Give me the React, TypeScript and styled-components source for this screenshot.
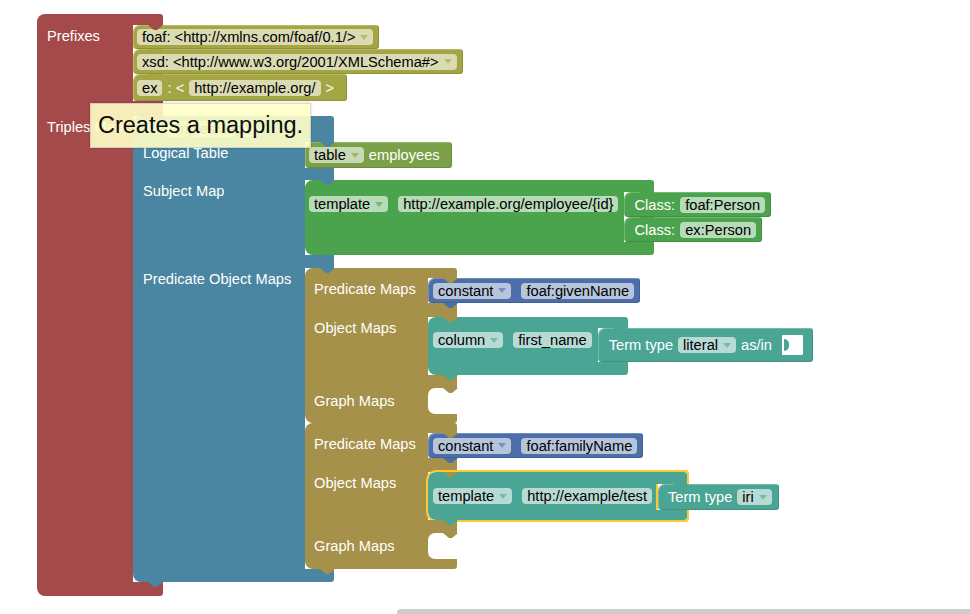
import React from "react";
import styled, { createGlobalStyle, css } from "styled-components";

const RED = "#a54a4b";
const OLIVE = "#a4a543";
const BLUE = "#4a86a1";
const LIME = "#7aa048";
const GREEN = "#4ca34e";
const GOLD = "#a59149";
const NAVY = "#4c6fa9";
const TEAL = "#4ba594";
const SEL = "#fcc833";

const GlobalStyle = createGlobalStyle`
  html, body { margin: 0; padding: 0; background: #fff; }
  body {
    font-family: "Liberation Sans", Arial, Helvetica, sans-serif;
    font-size: 14.67px;
  }
`;

const Workspace = styled.div`
  position: relative;
  box-sizing: border-box;
  width: 970px;
  height: 614px;
  overflow: hidden;
  padding: 14px 0 0 37px;
  background: #fff;
`;

// the little trapezoid that a block (or an arm above a slot) pushes downwards
const tab = (c: string, left: string) => css`
  &::after {
    content: "";
    position: absolute;
    z-index: 2;
    top: 100%;
    left: ${left};
    width: 15px;
    height: 5px;
    background: ${c};
    clip-path: polygon(0 0, 100% 0, 60% 100%, 40% 100%);
  }
`;

const Bar = styled.div<{ $c: string; $h: number; $edge?: "top" | "bottom"; $tab?: "slot" | "own"; $arm?: number }>`
  grid-column: 1 / 3;
  position: relative;
  box-sizing: border-box;
  height: ${p => p.$h}px;
  background: ${p => p.$c};
  border-radius: ${p => (p.$edge === "top" ? "8px 3px 0 0" : p.$edge === "bottom" ? "0 0 3px 8px" : "0")};
  ${p => p.$tab === "slot" && tab(p.$c, `calc(100% - ${p.$arm ?? 30}px + 15px)`)}
  ${p => p.$tab === "own" && tab(p.$c, "15px")}
`;

const Header = styled(Bar)`
  display: flex;
  align-items: center;
  gap: 5px;
  padding-left: 10px;
  color: #fff;
  white-space: nowrap;
`;

const Side = styled.div<{ $c: string; $fields?: boolean; $pl?: number; $pt?: number }>`
  grid-column: 1;
  display: flex;
  align-items: flex-start;
  gap: 5px;
  padding: ${p => (p.$fields ? `4px 6px 0 ${p.$pl ?? 5}px` : `${p.$pt ?? 3}px 0 0 ${p.$pl ?? 10}px`)};
  background: ${p => p.$c};
  color: #fff;
  line-height: 16px;
  white-space: nowrap;
`;

const Slot = styled.div`
  grid-column: 2 / 4;
  display: flex;
  flex-direction: column;
  align-items: flex-start;
`;

const CBlock = styled.div<{ $side?: number; $arm?: number; $sel?: boolean }>`
  position: relative;
  display: grid;
  grid-template-columns: ${p => (p.$side ? `${p.$side}px` : "max-content")} ${p => p.$arm ?? 30}px max-content;
  width: max-content;

  ${p =>
    p.$sel &&
    css`
      & > ${Bar}:first-child::before {
        content: "";
        position: absolute;
        left: -2px;
        right: -2px;
        top: -2px;
        bottom: 0;
        border: 2px solid ${SEL};
        border-bottom: 0;
        border-radius: 10px 4px 0 0;
      }
      & > ${Bar}:last-child::before {
        content: "";
        position: absolute;
        left: -2px;
        right: -2px;
        top: 0;
        bottom: -2px;
        border: 2px solid ${SEL};
        border-top: 0;
        border-radius: 0 0 4px 10px;
      }
      & > ${Side} {
        box-shadow: -2px 0 0 ${SEL}, inset -2px 0 0 ${SEL};
      }
    `}
`;

const Stmt = styled.div<{ $c: string; $h: number; $pl?: number; $pr?: number; $tab?: boolean }>`
  position: relative;
  box-sizing: border-box;
  display: flex;
  align-items: center;
  gap: 5px;
  height: ${p => p.$h}px;
  padding: 0 ${p => p.$pr ?? 6}px 0 ${p => p.$pl ?? 5}px;
  background: ${p => p.$c};
  border-radius: 7px 3px 3px 4px;
  box-shadow: inset 1px 1px 0 rgba(255, 255, 255, 0.22), inset -1px -1px 0 rgba(0, 0, 0, 0.12);
  color: #fff;
  white-space: nowrap;
  ${p => p.$tab && tab(p.$c, "15px")}
`;

const Field = styled.span`
  display: inline-flex;
  align-items: center;
  height: 16px;
  padding: 0 5px;
  border-radius: 4px;
  background: rgba(255, 255, 255, 0.6);
  color: #000;
  line-height: 16px;

  & + & {
    margin-left: 5px;
  }
`;

const Arrow = styled.span<{ $c: string }>`
  width: 0;
  height: 0;
  margin-left: 5px;
  border-left: 4.5px solid transparent;
  border-right: 4.5px solid transparent;
  border-top: 5px solid ${p => p.$c};
  opacity: 0.6;
`;

const Txt = styled.span`
  color: #fff;
  line-height: 16px;
`;

const Socket = styled.span<{ $c: string }>`
  position: relative;
  width: 21px;
  height: 20px;
  margin-left: 5px;
  background: #fff;
  border-radius: 1px;

  &::before {
    content: "";
    position: absolute;
    left: 2px;
    top: 4px;
    width: 5px;
    height: 12px;
    background: ${p => p.$c};
    border-radius: 0 6px 6px 0;
  }
`;

const Hole = styled.div<{ $c: string }>`
  position: relative;
  width: 29px;
  height: 26px;
  background: ${p => p.$c};

  &::before {
    content: "";
    position: absolute;
    inset: 0;
    background: #fff;
    border-radius: 7px 0 0 7px;
  }
`;

const Tooltip = styled.div`
  position: absolute;
  z-index: 10;
  left: 90px;
  top: 103px;
  padding: 6px 7px;
  background: #ffffc7;
  border: 1px solid #ddc;
  box-shadow: 0 0 2px rgba(0, 0, 0, 0.25);
  opacity: 0.9;
  color: #000;
  font-size: 23.5px;
  line-height: 31px;
  white-space: nowrap;
`;

const Scrollbar = styled.div`
  position: absolute;
  left: 397px;
  top: 609px;
  width: 600px;
  height: 8px;
  border-radius: 4px;
  background: #ccc;
`;

function Drop({ c, children }: { c: string; children: React.ReactNode }) {
  return (
    <Field>
      {children}
      <Arrow $c={c} />
    </Field>
  );
}

function PredicateObjectMap({ predicate, object, foot = 9 }: { predicate: string; object: React.ReactNode; foot?: number }) {
  return (
    <CBlock $side={123} $arm={29}>
      <Bar $c={GOLD} $h={10} $edge="top" $tab="slot" $arm={29} />
      <Side $c={GOLD} $pl={9}>Predicate Maps</Side>
      <Slot>
        <Stmt $c={NAVY} $h={25} $pl={5} $pr={6} $tab>
          <Drop c={NAVY}>constant</Drop>
          <Field>{predicate}</Field>
        </Stmt>
      </Slot>
      <Bar $c={GOLD} $h={14} $tab="slot" $arm={29} />
      <Side $c={GOLD} $pl={9}>Object Maps</Side>
      <Slot>{object}</Slot>
      <Bar $c={GOLD} $h={13} $tab="slot" $arm={29} />
      <Side $c={GOLD} $pl={9} $pt={5}>Graph Maps</Side>
      <Slot>
        <Hole $c={GOLD} />
      </Slot>
      <Bar $c={GOLD} $h={foot} $edge="bottom" $tab="own" />
    </CBlock>
  );
}

export default function App() {
  return (
    <>
      <GlobalStyle />
      <Workspace>
        <CBlock $side={96} $arm={30}>
          <Bar $c={RED} $h={11} $edge="top" $tab="slot" $arm={30} />
          <Side $c={RED}>Prefixes</Side>
          <Slot>
            <Stmt $c={OLIVE} $h={24} $pl={4} $pr={6} $tab>
              <Drop c={OLIVE}>foaf: &lt;http://xmlns.com/foaf/0.1/&gt;</Drop>
            </Stmt>
            <Stmt $c={OLIVE} $h={25} $pl={4} $pr={6} $tab>
              <Drop c={OLIVE}>xsd: &lt;http://www.w3.org/2001/XMLSchema#&gt;</Drop>
            </Stmt>
            <Stmt $c={OLIVE} $h={27} $pl={4} $pr={13}>
              <Field>ex</Field>
              <Txt>: &lt;</Txt>
              <Field>http://example.org/</Field>
              <Txt>&gt;</Txt>
            </Stmt>
          </Slot>
          <Bar $c={RED} $h={15} $tab="slot" $arm={30} />
          <Side $c={RED}>Triples Map</Side>
          <Slot>
            <CBlock $side={172} $arm={29}>
              <Header $c={BLUE} $h={26} $edge="top" $tab="slot" $arm={29}>
                <Txt>IRI</Txt>
                <Field>TriplesMap1</Field>
              </Header>
              <Side $c={BLUE}>Logical Table</Side>
              <Slot>
                <Stmt $c={LIME} $h={26} $pl={4} $pr={12}>
                  <Drop c={LIME}>table</Drop>
                  <Txt>employees</Txt>
                </Stmt>
              </Slot>
              <Bar $c={BLUE} $h={12} $tab="slot" $arm={29} />
              <Side $c={BLUE}>Subject Map</Side>
              <Slot>
                <CBlock $arm={30}>
                  <Bar $c={GREEN} $h={12} $edge="top" $tab="slot" $arm={30} />
                  <Side $c={GREEN} $fields $pl={4}>
                    <Drop c={GREEN}>template</Drop>
                    <Field>{"http://example.org/employee/{id}"}</Field>
                  </Side>
                  <Slot>
                    <Stmt $c={GREEN} $h={25} $pl={10} $pr={6} $tab>
                      <Txt>Class:</Txt>
                      <Field>foaf:Person</Field>
                    </Stmt>
                    <Stmt $c={GREEN} $h={25} $pl={10} $pr={6}>
                      <Txt>Class:</Txt>
                      <Field>ex:Person</Field>
                    </Stmt>
                  </Slot>
                  <Bar $c={GREEN} $h={13} $edge="bottom" />
                </CBlock>
              </Slot>
              <Bar $c={BLUE} $h={13} $tab="slot" $arm={29} />
              <Side $c={BLUE}>Predicate Object Maps</Side>
              <Slot>
                <PredicateObjectMap
                  predicate="foaf:givenName"
                  object={
                    <CBlock $arm={30}>
                      <Bar $c={TEAL} $h={11} $edge="top" $tab="slot" $arm={30} />
                      <Side $c={TEAL} $fields>
                        <Drop c={TEAL}>column</Drop>
                        <Field>first_name</Field>
                      </Side>
                      <Slot>
                        <Stmt $c={TEAL} $h={34} $pl={11} $pr={10}>
                          <Txt>Term type</Txt>
                          <Drop c={TEAL}>literal</Drop>
                          <Txt>as/in</Txt>
                          <Socket $c={TEAL} />
                        </Stmt>
                      </Slot>
                      <Bar $c={TEAL} $h={13} $edge="bottom" $tab="own" />
                    </CBlock>
                  }
                />
                <PredicateObjectMap
                  predicate="foaf:familyName"
                  foot={10}
                  object={
                    <CBlock $arm={29} $sel>
                      <Bar $c={TEAL} $h={12} $edge="top" $tab="slot" $arm={29} />
                      <Side $c={TEAL} $fields>
                        <Drop c={TEAL}>template</Drop>
                        <Field>http://example/test</Field>
                      </Side>
                      <Slot>
                        <Stmt $c={TEAL} $h={26} $pl={10} $pr={7}>
                          <Txt>Term type</Txt>
                          <Drop c={TEAL}>iri</Drop>
                        </Stmt>
                      </Slot>
                      <Bar $c={TEAL} $h={10} $edge="bottom" $tab="own" />
                    </CBlock>
                  }
                />
              </Slot>
              <Bar $c={BLUE} $h={13} $edge="bottom" $tab="own" />
            </CBlock>
          </Slot>
          <Bar $c={RED} $h={14} $edge="bottom" />
        </CBlock>

        <Tooltip>Creates a mapping.</Tooltip>
        <Scrollbar />
      </Workspace>
    </>
  );
}
